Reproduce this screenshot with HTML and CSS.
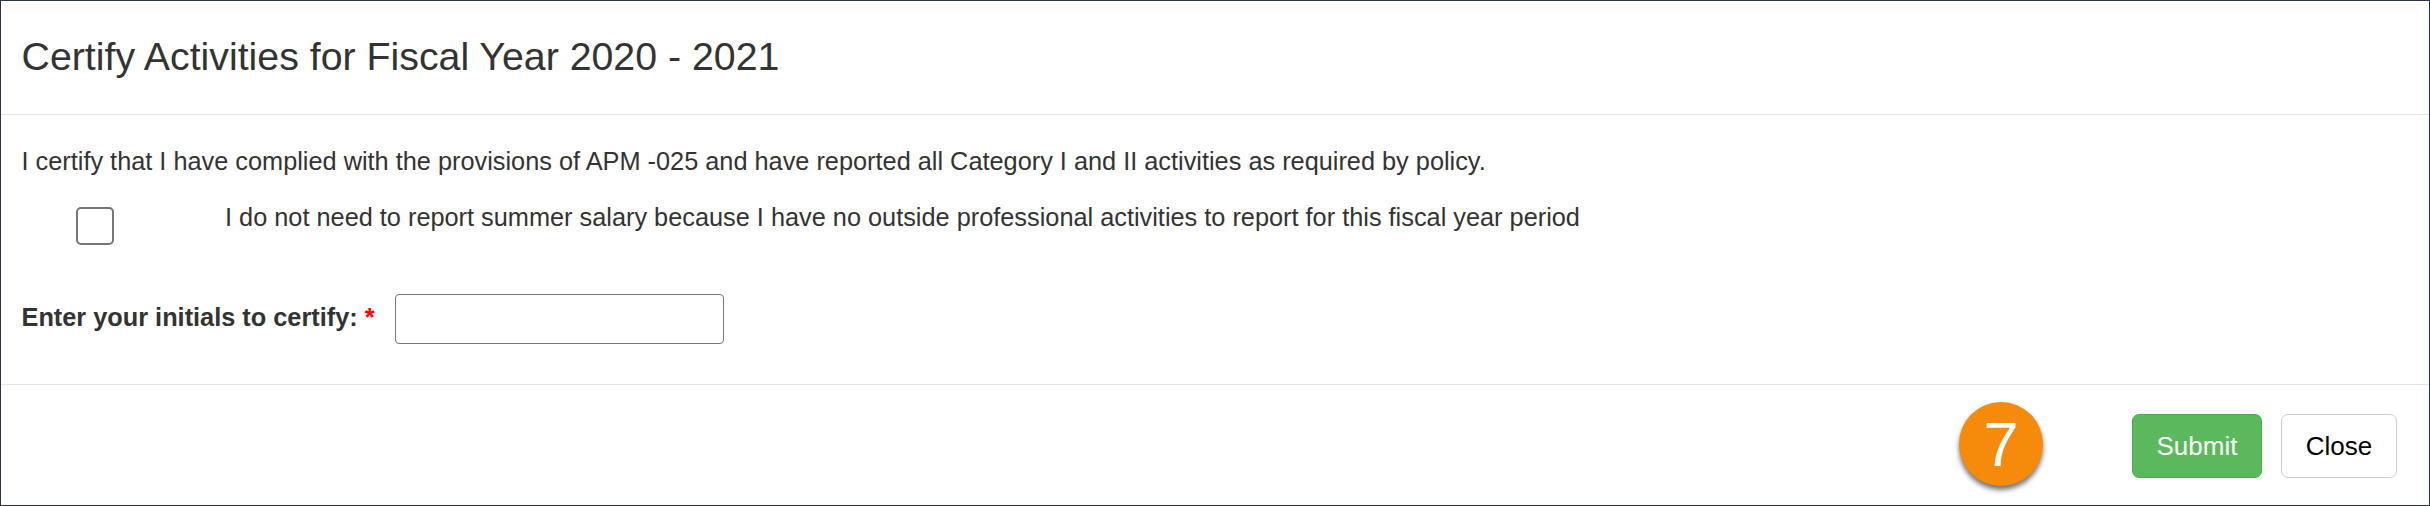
FILE: index.html
```html
<!DOCTYPE html>
<html lang="en">
<head>
<meta charset="utf-8">
<title>Certify Activities</title>
<link rel="stylesheet" href="styles.css">
</head>
<body>
<main class="dialog">
  <header class="dialog-header"><h1 class="title">Certify Activities for Fiscal Year 2020 - 2021</h1></header>
  <section class="dialog-body">
    <p class="statement"><span>I certify that I have complied with the provisions of APM -025 and have reported all Category I and II activities as required by policy.</span></p>
    <label class="option">
      <input class="checkbox" type="checkbox">
      <span class="option-text">I do not need to report summer salary because I have no outside professional activities to report for this fiscal year period</span>
    </label>
    <div class="field">
      <label class="field-label" for="initials"><span>Enter your initials to certify:</span> <span class="required">*</span></label>
      <input class="field-input" id="initials" type="text">
    </div>
  </section>
  <footer class="dialog-footer">
    <span class="step">7</span>
    <button class="button submit" type="button">Submit</button>
    <button class="button close" type="button">Close</button>
  </footer>
</main>
</body>
</html>
```
FILE: styles.css
```css
* { box-sizing: border-box; }
body { margin: 0; background: #fff; }
.dialog {
  display: flex;
  flex-direction: column;
  width: 2430px;
  height: 506px;
  border: 1px solid #2b3347;
  color: #333;
  font: 25.32px/35px "Liberation Sans", Arial, sans-serif;
  white-space: nowrap;
}
.dialog-header {
  height: 114px;
  padding: 34px 20px 0 20.5px;
  border-bottom: 1px solid #e5e5e5;
}
.title { margin: 0; font-size: 39.3px; font-weight: 400; line-height: 43px; }
.dialog-body {
  height: 270px;
  padding: 29px 20px 0 20.5px;
  border-bottom: 1px solid #e5e5e5;
}
.statement { margin: 0; }
.option { display: flex; align-items: flex-start; margin-top: 21px; }
.checkbox {
  appearance: none;
  width: 38px;
  height: 38px;
  margin: 7px 111px 0 54.5px;
  border: 2px solid #767676;
  border-radius: 5px;
  background: #fff;
}
.field { display: flex; margin-top: 49px; }
.field-label { width: 373.5px; padding-top: 6px; font-weight: 700; }
.required { color: #f00; }
.field-input {
  width: 329px;
  height: 50px;
  padding: 2px 8px;
  border: 1px solid #767676;
  border-radius: 4px;
  background: #fff;
  font: inherit;
}
.dialog-footer {
  display: flex;
  align-items: flex-start;
  justify-content: flex-end;
  flex: 1;
  padding: 17px 32px 0 0;
}
.step {
  width: 84px;
  height: 84px;
  margin-right: 89px;
  border-radius: 50%;
  background: #f68b0b;
  box-shadow: 0 4px 5px rgba(0, 0, 0, .55);
  color: #fff;
  font-size: 63px;
  line-height: 85px;
  text-align: center;
}
.button {
  height: 64px;
  margin-top: 12px;
  padding: 0;
  border: 1px solid #ccc;
  border-radius: 7px;
  background: #fff;
  color: #000;
  font: inherit;
  font-size: 26px;
}
.submit { width: 130px; margin-right: 19px; border-color: #4cae4c; background: #5cb85c; color: #fff; }
.close { width: 116px; }
```
